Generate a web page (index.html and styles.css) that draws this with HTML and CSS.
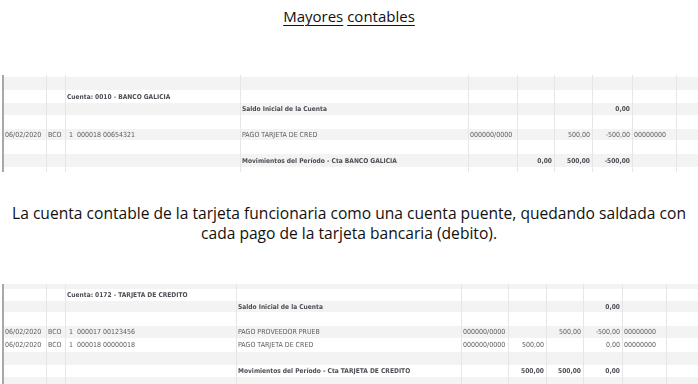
FILE: index.html
```html
<!DOCTYPE html>
<html lang="es">
<head>
<meta charset="utf-8">
<title>Mayores contables</title>
<link rel="stylesheet" href="styles.css">
</head>
<body>
<header class="title">
  <h1><span class="u">Mayores</span> <span class="u">contables</span></h1>
</header>

<section class="ledger ledger-a">
  <div class="row top"><div></div><div></div><div></div><div></div><div></div><div></div><div></div><div></div><div></div><div></div></div>
  <div class="row alt h13"><div></div><div></div><div></div><div></div><div></div><div></div><div></div><div></div><div></div><div></div></div>
  <div class="row h13"><div></div><div></div><div class="b span">Cuenta: 0010 - BANCO GALICIA</div><div></div><div></div><div></div><div></div><div></div><div></div><div></div></div>
  <div class="row alt h12"><div></div><div></div><div></div><div class="b">Saldo Inicial de la Cuenta</div><div></div><div></div><div></div><div class="num b">0,00</div><div></div><div></div></div>
  <div class="row h14"><div></div><div></div><div></div><div></div><div></div><div></div><div></div><div></div><div></div><div></div></div>
  <div class="row alt h11"><div>06/02/2020</div><div>BCO</div><div class="ref">1&nbsp; 000018 00654321</div><div>PAGO TARJETA DE CRED</div><div>000000/0000</div><div></div><div class="num">500,00</div><div class="num">-500,00</div><div>00000000</div><div></div></div>
  <div class="row h14"><div></div><div></div><div></div><div></div><div></div><div></div><div></div><div></div><div></div><div></div></div>
  <div class="row alt h13"><div></div><div></div><div></div><div class="b">Movimientos del Período - Cta BANCO GALICIA</div><div></div><div class="num b">0,00</div><div class="num b">500,00</div><div class="num b">-500,00</div><div></div><div></div></div>
  <div class="row h5"><div></div><div></div><div></div><div></div><div></div><div></div><div></div><div></div><div></div><div></div></div>
</section>

<p class="note">La cuenta contable de la tarjeta funcionaria como una cuenta puente, quedando saldada con<br>cada pago de la tarjeta bancaria (debito).</p>

<section class="ledger ledger-b">
  <div class="row alt h5"><div></div><div></div><div></div><div></div><div></div><div></div><div></div><div></div><div></div><div></div></div>
  <div class="row h12"><div></div><div></div><div class="b span">Cuenta: 0172 - TARJETA DE CREDITO</div><div></div><div></div><div></div><div></div><div></div><div></div><div></div></div>
  <div class="row alt h11"><div></div><div></div><div></div><div class="b">Saldo Inicial de la Cuenta</div><div></div><div></div><div></div><div class="num b">0,00</div><div></div><div></div></div>
  <div class="row h14"><div></div><div></div><div></div><div></div><div></div><div></div><div></div><div></div><div></div><div></div></div>
  <div class="row alt h12"><div>06/02/2020</div><div>BCO</div><div class="ref">1&nbsp; 000017 00123456</div><div>PAGO PROVEEDOR PRUEB</div><div>000000/0000</div><div></div><div class="num">500,00</div><div class="num">-500,00</div><div>00000000</div><div></div></div>
  <div class="row h14"><div>06/02/2020</div><div>BCO</div><div class="ref">1&nbsp; 000018 00000018</div><div>PAGO TARJETA DE CRED</div><div>000000/0000</div><div class="num">500,00</div><div></div><div class="num">0,00</div><div>00000000</div><div></div></div>
  <div class="row alt h13"><div></div><div></div><div></div><div></div><div></div><div></div><div></div><div></div><div></div><div></div></div>
  <div class="row h12"><div></div><div></div><div></div><div class="b">Movimientos del Período - Cta TARJETA DE CREDITO</div><div></div><div class="num b">500,00</div><div class="num b">500,00</div><div class="num b">0,00</div><div></div><div></div></div>
  <div class="row alt h7"><div></div><div></div><div></div><div></div><div></div><div></div><div></div><div></div><div></div><div></div></div>
</section>
</body>
</html>
```

FILE: styles.css
```css
html, body {
  margin: 0;
  padding: 0;
  background: #ffffff;
}

body {
  width: 698px;
  height: 384px;
  overflow: hidden;
}

.title {
  height: 75px;
  box-sizing: border-box;
  padding-top: 6px;
  text-align: center;
}

.title h1 {
  margin: 0;
  font-family: "Open Sans", "Liberation Sans", sans-serif;
  font-weight: 400;
  font-size: 15px;
  line-height: 20px;
  color: #111111;
}

.title .u {
  text-decoration: underline;
  text-underline-offset: 3px;
  text-decoration-thickness: 1px;
}

.ledger {
  margin-left: 2px;
  border-left: 2px solid #a8a8a8;
  font-family: "DejaVu Sans Condensed", "DejaVu Sans", sans-serif;
  font-size: 7px;
  color: #5a5c60;
  will-change: transform;
  opacity: 0.999;
}

.ledger-a .row {
  grid-template-columns: 43px 19px 175px 228px 49px 37px 38px 40px 44px 1fr;
}

.ledger-b .row {
  grid-template-columns: 43px 19px 171px 225px 47px 38px 37px 39px 44px 1fr;
}

.row {
  display: grid;
  align-items: stretch;
}

.row > div {
  box-sizing: border-box;
  border-right: 1px solid #e6e6e6;
  padding-left: 1px;
  white-space: nowrap;
  display: flex;
  align-items: center;
  overflow: visible;
  min-width: 0;
}

.row > div:last-child {
  border-right: none;
}

.row.alt {
  background: #f3f3f3;
}

.top { height: 2px; }
.h5 { height: 5px; }
.h7 { height: 7px; }
.h11 { height: 11px; }
.h12 { height: 12px; }
.h13 { height: 13px; }
.h14 { height: 14px; }

.b {
  font-weight: 700;
  font-size: 6.6px;
  color: #4b4e54;
}

.row > .num {
  justify-content: flex-end;
  padding-left: 0;
  padding-right: 2px;
}

.row > .ref {
  padding-left: 3px;
}

.note {
  margin: 0;
  height: 112px;
  box-sizing: border-box;
  padding-top: 31px;
  text-align: center;
  font-family: "Open Sans", "Liberation Sans", sans-serif;
  font-size: 15.6px;
  line-height: 20px;
  color: #111111;
}
```
